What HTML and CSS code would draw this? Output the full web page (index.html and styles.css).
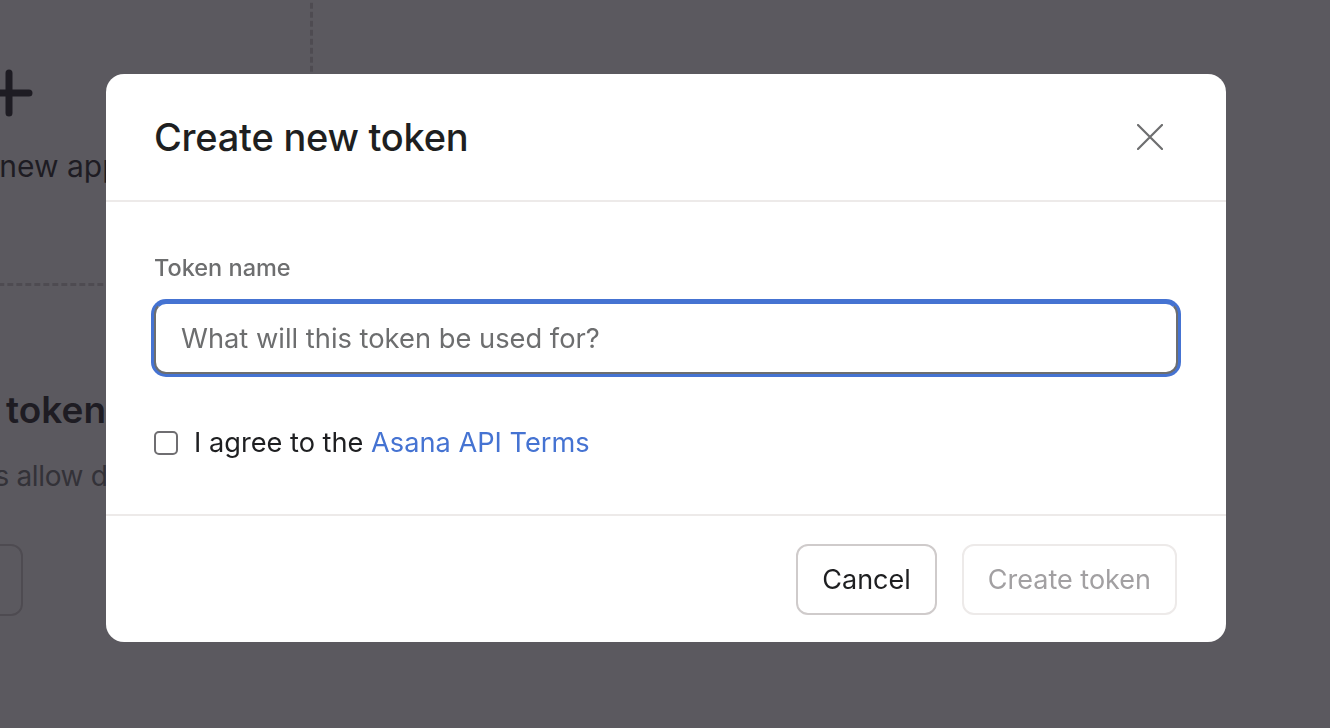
FILE: index.html
```html
<!DOCTYPE html>
<html lang="en">
<head>
<meta charset="utf-8">
<title>Create new token</title>
<link rel="stylesheet" href="styles.css">
</head>
<body>
<div class="page">
  <div class="apps">
    <div class="new-app-card">
      <svg class="plus" width="48" height="48" viewBox="0 0 48 48" aria-hidden="true">
        <path d="M24 4v40M4 24h40" stroke="currentColor" stroke-width="7" stroke-linecap="round" fill="none"/>
      </svg>
      <span class="new-app-label">Create new app</span>
    </div>
  </div>
  <section class="tokens">
    <h2 class="tokens-title">Personal access tokens</h2>
    <p class="tokens-desc">Personal access tokens allow developers to access the API</p>
    <button class="bg-btn">+ Create new token</button>
  </section>
</div>

<div class="overlay">
  <div class="modal" role="dialog" aria-labelledby="modal-title">
    <div class="modal-header">
      <h1 class="modal-title" id="modal-title">Create new token</h1>
      <button class="close-btn" aria-label="Close">
        <svg width="26" height="26" viewBox="0 0 26 26" aria-hidden="true">
          <path d="M1 1L25 25M25 1L1 25" stroke="currentColor" stroke-width="2.2" stroke-linecap="round" fill="none"/>
        </svg>
      </button>
    </div>
    <div class="modal-body">
      <label class="field-label" for="token-name">Token name</label>
      <input class="text-input" id="token-name" type="text" placeholder="What will this token be used for?">
      <div class="agree-row">
        <span class="checkbox"></span>
        <span class="agree-text">I agree to the <a class="link" href="#">Asana API Terms</a></span>
      </div>
    </div>
    <div class="modal-footer">
      <button class="btn btn-secondary">Cancel</button>
      <button class="btn btn-disabled">Create token</button>
    </div>
  </div>
</div>
</body>
</html>
```

FILE: styles.css
```css
* { box-sizing: border-box; }

html, body {
  margin: 0;
  padding: 0;
  height: 100%;
}

body {
  background: #ffffff;
  font-family: Inter, "Noto Sans", "Liberation Sans", sans-serif;
  color: #1e1f21;
  overflow: hidden;
}

/* ---------- background page ---------- */
.page {
  margin-left: -296px;
  width: 900px;
}

.apps {
  margin-top: -100px;
}

.new-app-card {
  width: 609px;
  height: 386px;
  border: 3px dashed #cfcbcb;
  border-radius: 12px;
  display: flex;
  flex-direction: column;
  align-items: center;
  padding-top: 166px;
  gap: 31px;
}

.plus {
  color: #1e1f21;
  display: block;
}

.new-app-label {
  font-size: 30px;
  color: #1e1f21;
}

.tokens {
  padding-top: 102px;
}

.tokens-title {
  margin: 0;
  font-size: 37px;
  font-weight: 600;
  line-height: 44px;
  color: #1e1f21;
}

.tokens-desc {
  margin: 27px 0 0;
  font-size: 28px;
  letter-spacing: -0.35px;
  line-height: 34px;
  color: #6d6e6f;
}

.bg-btn {
  margin-top: 51px;
  width: 319px;
  height: 72px;
  border: 2px solid #cfcbcb;
  border-radius: 12px;
  background: #fff;
  font: inherit;
  font-size: 26px;
  color: #1e1f21;
}

/* ---------- overlay & modal ---------- */
.overlay {
  position: fixed;
  inset: 0;
  background: rgba(30, 27, 35, 0.73);
  display: flex;
  align-items: center;
  justify-content: center;
  padding: 0 0 12px 2px;
}

.modal {
  width: 1120px;
  background: #ffffff;
  border-radius: 18px;
  display: flex;
  flex-direction: column;
}

.modal-header {
  height: 128px;
  padding: 0 52px 0 48px;
  display: flex;
  align-items: center;
  justify-content: space-between;
  border-bottom: 2px solid #edeae9;
}

.modal-title {
  margin: 0;
  font-size: 38px;
  font-weight: 500;
  line-height: 44px;
  letter-spacing: -0.25px;
  color: #1e1f21;
}

.close-btn {
  width: 48px;
  height: 48px;
  padding: 0;
  border: 0;
  background: transparent;
  color: #6d6e6f;
  display: flex;
  align-items: center;
  justify-content: center;
}

.modal-body {
  padding: 51px 48px 55px;
  display: flex;
  flex-direction: column;
  border-bottom: 2px solid #edeae9;
}

.field-label {
  font-size: 23.5px;
  font-weight: 500;
  line-height: 29px;
  color: #6d6e6f;
}

.text-input {
  margin-top: 20px;
  width: 100%;
  height: 72px;
  border: 2px solid #6d6e6f;
  border-top-color: #4573d2;
  border-radius: 12px;
  box-shadow: 0 0 0 3px #4573d2;
  padding: 0 25px;
  font: inherit;
  font-size: 27.3px;
  color: #1e1f21;
  outline: none;
  background: #fff;
}

.text-input::placeholder {
  color: #6d6e6f;
}

.agree-row {
  margin-top: 53px;
  height: 32px;
  display: flex;
  align-items: center;
  gap: 16px;
}

.checkbox {
  width: 24px;
  height: 24px;
  border: 2px solid #6f6e71;
  border-radius: 5px;
  flex: none;
}

.agree-text {
  font-size: 27.2px;
  line-height: 32px;
  color: #1e1f21;
}

.link {
  color: #4573d2;
  text-decoration: none;
}

.modal-footer {
  height: 126px;
  padding: 0 49px;
  display: flex;
  align-items: center;
  justify-content: flex-end;
  gap: 25px;
}

.btn {
  height: 71px;
  padding: 0 24px;
  border-radius: 12px;
  background: #fff;
  font: inherit;
  font-size: 27px;
}

.btn-secondary {
  border: 2px solid #cfcbcb;
  color: #1e1f21;
}

.btn-disabled {
  border: 2px solid #edeae9;
  color: #a2a0a2;
}
```
